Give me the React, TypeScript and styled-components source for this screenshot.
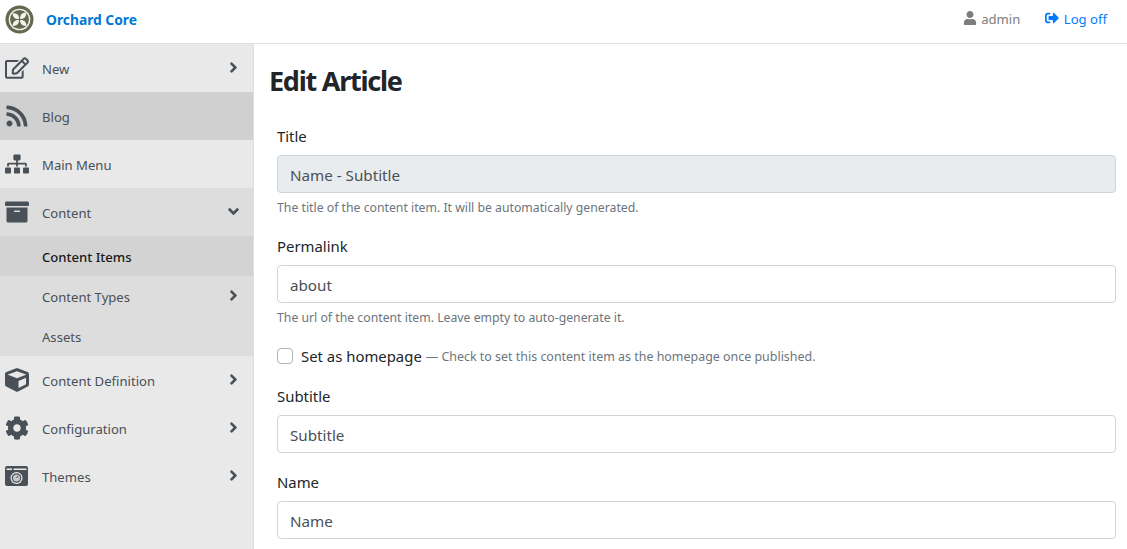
import React from "react";
import styled, { createGlobalStyle } from "styled-components";
import { FaRegEdit, FaRss, FaSitemap, FaArchive, FaCube, FaCog, FaUser, FaSignOutAlt, FaAngleRight, FaAngleDown } from "react-icons/fa";

const Global = createGlobalStyle`
  html, body { margin: 0; padding: 0; height: 100%; overflow: hidden; background: #fff; }
  body { font-family: "Noto Sans", "Open Sans", sans-serif; color: #212529; }
  * { box-sizing: border-box; }
`;

const Page = styled.div`
  display: flex;
  flex-direction: column;
  height: 549px;
  overflow: hidden;
`;

const TopBar = styled.header`
  flex: 0 0 44px;
  display: flex;
  align-items: center;
  justify-content: space-between;
  padding: 0 20px 5px 5px;
  border-bottom: 1px solid #dfdfdf;
  background: #fff;
`;

const Brand = styled.a`
  display: flex;
  align-items: center;
  gap: 12px;
  font-size: 13.8px;
  font-weight: 700;
  color: #0078d7;
`;

const UserArea = styled.div`
  display: flex;
  align-items: center;
  gap: 25px;
`;

const NavText = styled.span<{ $link?: boolean }>`
  display: flex;
  align-items: center;
  gap: 4.5px;
  font-size: 13.1px;
  color: ${(p) => (p.$link ? "#007bff" : "#7d7d7d")};
  svg { font-size: 14px; position: relative; top: -1px; }
`;

const Body = styled.div`
  flex: 1;
  display: flex;
  min-height: 0;
`;

const Sidebar = styled.nav`
  flex: 0 0 254px;
  background: #e9e9e9;
  border-right: 1px solid #dfdfdf;
`;

const MenuRow = styled.div<{ $bg?: string; $sub?: boolean; $strong?: boolean }>`
  display: flex;
  align-items: center;
  height: ${(p) => (p.$sub ? "40px" : "48px")};
  padding: ${(p) => (p.$sub ? "0 0 0 42px" : "0 0 0 4px")};
  background: ${(p) => p.$bg ?? "transparent"};
  color: ${(p) => (p.$strong ? "#16181b" : "#495057")};
  font-size: 13.1px;
  font-weight: ${(p) => (p.$strong ? 500 : 400)};
`;

const IconSlot = styled.span`
  flex: 0 0 38px;
  display: flex;
  justify-content: center;
  padding-right: 13px;
  font-size: 24px;
  color: #495057;
`;

const RowLabel = styled.span`
  flex: 1;
  position: relative;
  top: 0.5px;
`;

const Caret = styled.span`
  flex: 0 0 26px;
  display: flex;
  margin-right: 2px;
  position: relative;
  top: -1px;
  font-size: 17px;
  color: #495057;
`;

const SubGroup = styled.div`
  background: #dddddd;
`;

const Main = styled.main`
  flex: 1;
  padding: 0 11px 0 16px;
`;

const Title = styled.h1`
  margin: 17px 0 23px -1px;
  font-size: 27px;
  line-height: 40px;
  font-weight: 700;
  letter-spacing: -1.25px;
  color: #212529;
`;

const Form = styled.form`
  padding-left: 7px;
`;

const Field = styled.div`
  margin-bottom: 17px;
`;

const Label = styled.label`
  display: block;
  margin-bottom: 7px;
  font-size: 14.9px;
  line-height: 24px;
  color: #212529;
`;

const Input = styled.input`
  display: block;
  width: 100%;
  height: 38px;
  padding: 2px 12px 0;
  border: 1px solid #ced4da;
  border-radius: 4px;
  font: inherit;
  font-size: 15.2px;
  color: #495057;
  background: #fff;
  &:disabled, &[readonly] { background: #e9ecef; }
`;

const Hint = styled.div`
  margin: 5px 0 -1px;
  font-size: 12.25px;
  line-height: 20px;
  color: #6c757d;
`;

const CheckRow = styled.div`
  display: flex;
  align-items: center;
  height: 24px;
  margin-bottom: 16px;
`;

const Box = styled.span`
  flex: 0 0 16px;
  width: 16px;
  height: 16px;
  margin-right: 8px;
  border: 1px solid #adb5bd;
  border-radius: 4px;
  background: #fff;
`;

const CheckLabel = styled.span`
  font-size: 14.9px;
  color: #212529;
`;

const CheckHint = styled.span`
  margin-left: 4px;
  font-size: 12.45px;
  color: #6c757d;
`;

const Logo = () => (
  <svg width="29" height="29" viewBox="0 0 29 29">
    <circle cx="14.5" cy="14.5" r="14" fill="#66694f" />
    <circle cx="14.5" cy="14.5" r="10.8" fill="#f2f2ec" />
    <circle cx="14.5" cy="14.5" r="9.4" fill="#66694f" />
    <g fill="#f4f4ef">
      <path d="M13.9 13.9C10 14.2 7.6 12 7.7 8.4 11.5 7.8 14.4 10 13.9 13.9Z" />
      <path d="M15.1 13.9C14.8 10 17 7.4 21.2 7.8 21.4 11.7 19 14.3 15.1 13.9Z" />
      <path d="M13.9 15.1C14.2 18.8 11.5 21.2 7.7 20.9 7.6 17.3 10 14.7 13.9 15.1Z" />
      <path d="M15.1 15.1C19 14.7 21.6 17 21.2 20.9 17.6 21.4 14.9 19 15.1 15.1Z" />
    </g>
  </svg>
);

const ThemesIcon = () => (
  <svg width="23" height="20" viewBox="0 0 23 20">
    <path fill="#495057" fillRule="evenodd" d="M2 0H21a2 2 0 0 1 2 2V18a2 2 0 0 1-2 2H2a2 2 0 0 1-2-2V2A2 2 0 0 1 2 0ZM1.5 2.5V4H7V2.5ZM8.5 2.5V4H21.5V2.5Z" />
    <circle cx="11.5" cy="12" r="6" fill="#eeeeee" />
    <circle cx="11.5" cy="12" r="4.8" fill="#495057" />
    <circle cx="11.5" cy="12" r="3.6" fill="#c4c6c8" />
    <path d="M11.5 12L13 10" stroke="#495057" strokeWidth="1" />
  </svg>
);

function Row({ icon, label, bg, caret }: { icon: React.ReactNode; label: string; bg?: string; caret?: "right" | "down" }) {
  return (
    <MenuRow $bg={bg}>
      <IconSlot>{icon}</IconSlot>
      <RowLabel>{label}</RowLabel>
      {caret && <Caret>{caret === "right" ? <FaAngleRight /> : <FaAngleDown />}</Caret>}
    </MenuRow>
  );
}

function TextField({ label, value, hint, disabled }: { label: string; value: string; hint?: string; disabled?: boolean }) {
  return (
    <Field>
      <Label>{label}</Label>
      <Input defaultValue={value} readOnly={disabled} />
      {hint && <Hint>{hint}</Hint>}
    </Field>
  );
}

export default function App() {
  return (
    <Page>
      <Global />
      <TopBar>
        <Brand><Logo />Orchard Core</Brand>
        <UserArea>
          <NavText><FaUser />admin</NavText>
          <NavText $link><FaSignOutAlt />Log off</NavText>
        </UserArea>
      </TopBar>
      <Body>
        <Sidebar>
          <Row icon={<FaRegEdit />} label="New" caret="right" />
          <Row icon={<FaRss />} label="Blog" bg="#d0d0d0" />
          <Row icon={<FaSitemap />} label="Main Menu" />
          <SubGroup>
            <Row icon={<FaArchive />} label="Content" caret="down" />
            <MenuRow $sub $strong $bg="#d3d3d3"><RowLabel>Content Items</RowLabel></MenuRow>
            <MenuRow $sub><RowLabel>Content Types</RowLabel><Caret><FaAngleRight /></Caret></MenuRow>
            <MenuRow $sub><RowLabel>Assets</RowLabel></MenuRow>
          </SubGroup>
          <Row icon={<FaCube />} label="Content Definition" caret="right" />
          <Row icon={<FaCog />} label="Configuration" caret="right" />
          <Row icon={<ThemesIcon />} label="Themes" caret="right" />
        </Sidebar>
        <Main>
          <Title>Edit Article</Title>
          <Form onSubmit={(e) => e.preventDefault()}>
            <TextField label="Title" value="Name - Subtitle" hint="The title of the content item. It will be automatically generated." disabled />
            <TextField label="Permalink" value="about" hint="The url of the content item. Leave empty to auto-generate it." />
            <CheckRow>
              <Box />
              <CheckLabel>Set as homepage</CheckLabel>
              <CheckHint>— Check to set this content item as the homepage once published.</CheckHint>
            </CheckRow>
            <TextField label="Subtitle" value="Subtitle" />
            <TextField label="Name" value="Name" />
          </Form>
        </Main>
      </Body>
    </Page>
  );
}
